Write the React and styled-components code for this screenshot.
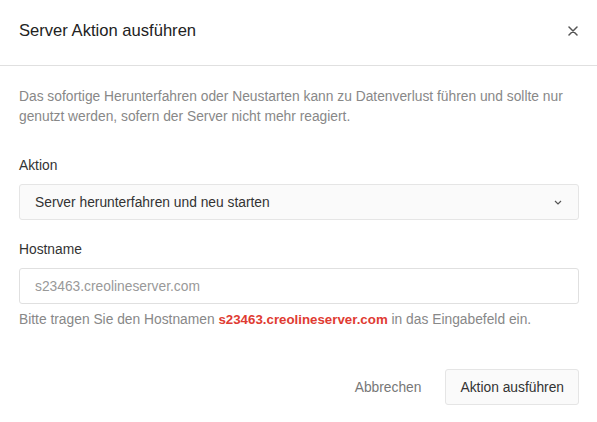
import React from "react";
import styled, { createGlobalStyle } from "styled-components";

const Global = createGlobalStyle`
  html, body {
    margin: 0;
    padding: 0;
    background: #fff;
  }
  body {
    font-family: "Liberation Sans", Arial, sans-serif;
    -webkit-font-smoothing: antialiased;
  }
  * { box-sizing: border-box; }
`;

const App = () => {
  return (
    <>
      <Global />
      <S.Dialog>
        <S.Header>
          <S.Title>Server Aktion ausführen</S.Title>
          <S.Close aria-label="Schließen">
            <svg width="10" height="10" viewBox="0 0 10 10">
              <path d="M1 1L9 9M9 1L1 9" stroke="#555" strokeWidth="1.5" strokeLinecap="round" />
            </svg>
          </S.Close>
        </S.Header>
        <S.Body>
          <S.Intro>
            Das sofortige Herunterfahren oder Neustarten kann zu Datenverlust führen und sollte nur
            genutzt werden, sofern der Server nicht mehr reagiert.
          </S.Intro>

          <S.Field>
            <S.Label>Aktion</S.Label>
            <S.Select>
              <span>Server herunterfahren und neu starten</span>
              <svg width="8" height="5" viewBox="0 0 8 5">
                <path d="M1 1L4 4L7 1" fill="none" stroke="#555" strokeWidth="1.2" />
              </svg>
            </S.Select>
          </S.Field>

          <S.Field>
            <S.Label>Hostname</S.Label>
            <S.Input placeholder="s23463.creolineserver.com" />
            <S.Help>
              Bitte tragen Sie den Hostnamen <S.Host>s23463.creolineserver.com</S.Host> in das
              Eingabefeld ein.
            </S.Help>
          </S.Field>
        </S.Body>
        <S.Footer>
          <S.Button>Abbrechen</S.Button>
          <S.Button primary>Aktion ausführen</S.Button>
        </S.Footer>
      </S.Dialog>
    </>
  );
};

export default App;

const S = {};

S.Dialog = styled.div`
  width: 597px;
  height: 422px;
  background: #fff;
  display: flex;
  flex-direction: column;
`;

S.Header = styled.div`
  height: 66px;
  display: flex;
  align-items: center;
  justify-content: space-between;
  padding: 0 19px 3px 19px;
  border-bottom: 1px solid #e0e0e0;
`;

S.Title = styled.h2`
  margin: 0;
  font-size: 16.6px;
  font-weight: 400;
  color: #222;
`;

S.Close = styled.button`
  border: 0;
  background: none;
  padding: 0;
  display: flex;
  align-items: center;
  justify-content: center;
  width: 10px;
  height: 10px;
  cursor: pointer;
`;

S.Body = styled.div`
  padding: 21px 18px 0 19px;
  display: flex;
  flex-direction: column;
  gap: 20px;
`;

S.Intro = styled.p`
  margin: 0 0 9px 0;
  max-width: 545px;
  font-size: 13.8px;
  line-height: 20px;
  color: #888;
`;

S.Field = styled.div`
  display: flex;
  flex-direction: column;
`;

S.Label = styled.label`
  font-size: 13.8px;
  line-height: 20px;
  color: #333;
  margin-bottom: 8px;
`;

S.Select = styled.div`
  height: 36px;
  display: flex;
  align-items: center;
  justify-content: space-between;
  padding: 0 16px 0 15px;
  background: #fafafa;
  border: 1px solid #e5e5e5;
  border-radius: 3px;
  font-size: 13.8px;
  color: #333;
`;

S.Input = styled.input`
  height: 36px;
  padding: 0 15px;
  border: 1px solid #e0e0e0;
  border-radius: 3px;
  font-family: inherit;
  font-size: 13.8px;
  color: #333;
  outline: none;

  &::placeholder {
    color: #999;
  }
`;

S.Help = styled.p`
  margin: 6px 0 0 0;
  font-size: 13.8px;
  line-height: 20px;
  color: #888;
`;

S.Host = styled.strong`
  color: #e03b32;
  font-size: 13.3px;
  font-weight: 700;
`;

S.Footer = styled.div`
  margin-top: auto;
  padding: 0 18px 17px 0;
  display: flex;
  justify-content: flex-end;
  align-items: center;
  gap: 4px;
`;

S.Button = styled.button`
  height: 36px;
  padding: 0 ${({ primary }) => (primary ? "14px" : "19px")};
  font-family: inherit;
  font-size: 13.8px;
  border-radius: 3px;
  border: 1px solid ${({ primary }) => (primary ? "#e5e5e5" : "transparent")};
  background: ${({ primary }) => (primary ? "#fafafa" : "transparent")};
  color: ${({ primary }) => (primary ? "#333" : "#777")};
  cursor: pointer;
`;
